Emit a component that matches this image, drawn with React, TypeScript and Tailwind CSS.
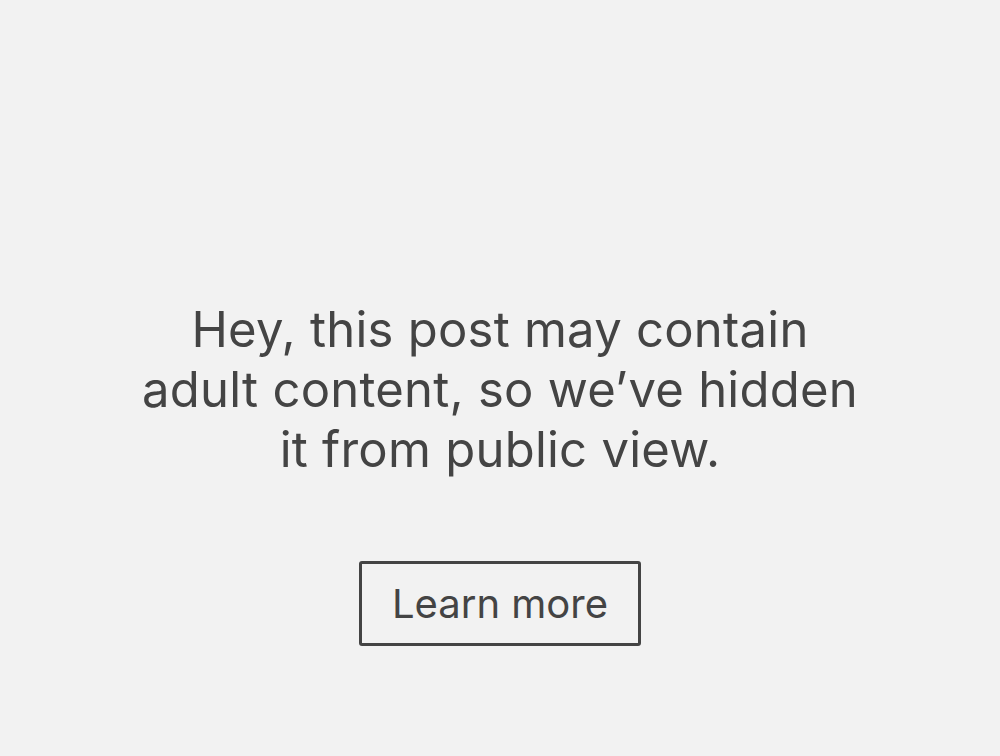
export default function App() {
  return (
    <div
      className="min-h-[756px] w-full bg-[#f2f2f2] flex flex-col items-center pt-[300px] text-[#444444]"
      style={{ fontFamily: "Inter, 'Noto Sans', sans-serif" }}
    >
      <p className="text-center text-[49px] leading-[60px] tracking-[0.005em]">
        Hey, this post may contain
        <br />
        adult content, so we’ve hidden
        <br />
        it from public view.
      </p>
      <button className="mt-[81px] w-[282px] h-[85px] border-[3px] border-[#444444] rounded-[3px] text-[40px] text-[#444444]">
        Learn more
      </button>
    </div>
  );
}
